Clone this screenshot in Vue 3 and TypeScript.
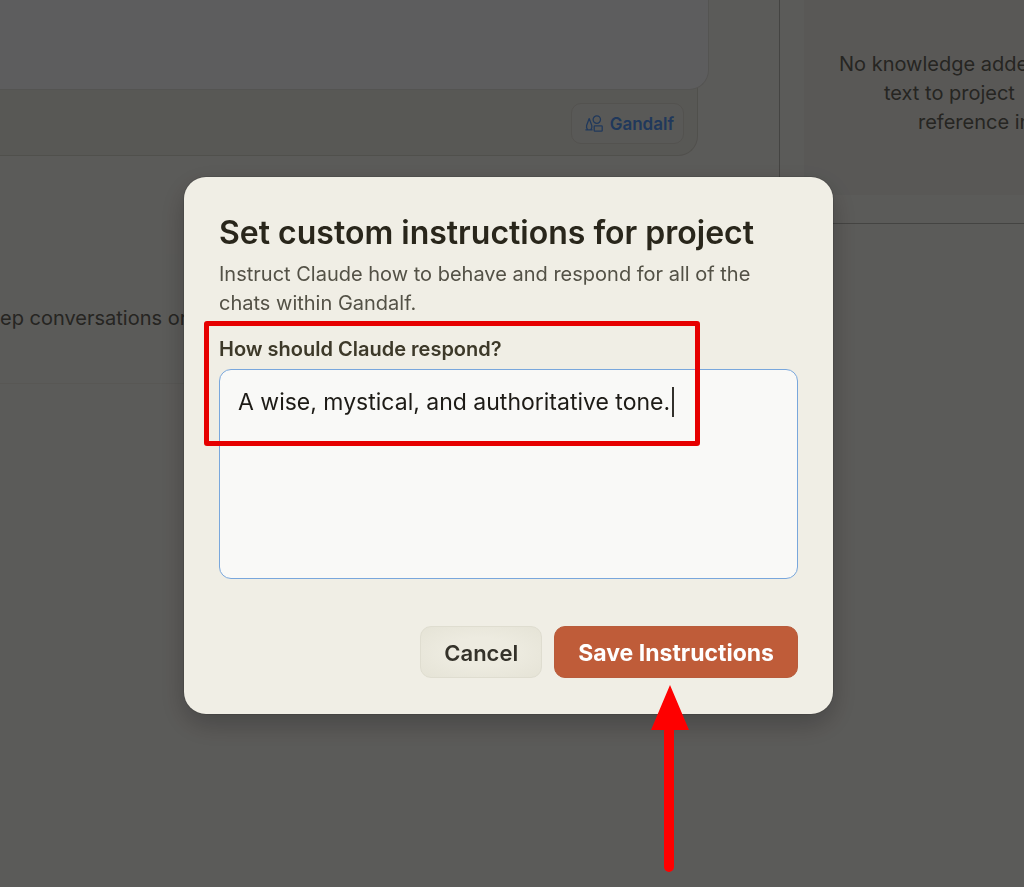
<script setup lang="ts">
import { ref } from 'vue'

const instructions = ref<string>('A wise, mystical, and authoritative tone.')
const knowledgeLines: string[] = ['No knowledge added', 'text to project', 'reference in']
</script>

<template>
  <div class="page">
    <main class="content">
      <div class="composer"></div>
      <div class="composer-footer">
        <button type="button" class="chip">
          <svg class="chip-icon" viewBox="0 0 18 18" aria-hidden="true">
            <path d="M4.2 3.6 L1.6 10.4 V12.8 L2.6 14.8 H5.8 L6.8 12.8 V10.4 Z M.4 14.8 H7.6" />
            <circle cx="11.8" cy="4.6" r="3.7" />
            <rect x="9.2" y="10.8" width="8" height="5.4" rx="0.6" />
          </svg>
          Gandalf
        </button>
      </div>
      <section class="tip">
        <p>ep conversations or</p>
      </section>
    </main>
    <aside class="side">
      <div class="knowledge">
        <p v-for="line in knowledgeLines" :key="line">{{ line }}</p>
      </div>
    </aside>
  </div>

  <div class="backdrop">
    <form class="modal" role="dialog" aria-modal="true" aria-labelledby="dialog-title" @submit.prevent>
      <h2 id="dialog-title">Set custom instructions for project</h2>
      <p class="description">
        Instruct Claude how to behave and respond for all of the chats within Gandalf.
      </p>
      <label for="instructions">How should Claude respond?</label>
      <div class="field">
        <textarea id="instructions" v-model="instructions" spellcheck="false"></textarea>
        <span class="caret"></span>
      </div>
      <div class="actions">
        <button type="button" class="cancel">Cancel</button>
        <button type="submit" class="save">Save Instructions</button>
      </div>
      <div class="highlight"></div>
      <svg class="arrow" viewBox="0 0 40 188" aria-hidden="true">
        <path d="M20 0 L39 45 H24 V182 A5 5 0 0 1 14 182 V45 H1 Z" fill="#fe0000" />
      </svg>
    </form>
  </div>
</template>

<style>
body {
  margin: 0;
  background: #f0eee9;
}
</style>

<style scoped>
.page,
.backdrop {
  font-family: Inter, "Liberation Sans", sans-serif;
  box-sizing: border-box;
}

.page {
  display: grid;
  grid-template-columns: 779px minmax(0, 1fr);
  min-height: 100vh;
  overflow: hidden;
  color: #64625a;
  font-size: 20px;
  line-height: 29px;
}

.page p {
  margin: 0;
  white-space: nowrap;
}

.composer {
  position: relative;
  z-index: 1;
  box-sizing: border-box;
  height: 90px;
  margin-right: 70px;
  background: #f5f5f7;
  border-right: 1px solid #dddcd8;
  border-bottom: 1px solid #dddcd8;
  border-bottom-right-radius: 20px;
}

.composer-footer {
  display: flex;
  justify-content: flex-end;
  box-sizing: border-box;
  height: 86px;
  margin: -20px 81px 0 0;
  padding: 33px 13px 12px 0;
  background: #e8e8e0;
  border-right: 1px solid #d3d1c9;
  border-bottom: 1px solid #d3d1c9;
  border-bottom-right-radius: 20px;
}

.chip {
  display: flex;
  align-items: center;
  gap: 7px;
  height: 41px;
  padding: 0 9px 0 13px;
  background: #ebeae4;
  border: 1px solid #d9d7cf;
  border-radius: 10px;
  color: #5494f0;
  font: 600 17px/24px Inter, "Liberation Sans", sans-serif;
}

.chip-icon {
  width: 18px;
  height: 18px;
  fill: none;
  stroke: #5494f0;
  stroke-width: 1.3;
  stroke-linejoin: round;
}

.tip {
  box-sizing: border-box;
  height: 130px;
  margin: 98px 81px 0 0;
  padding-top: 50px;
  background: #efeee9;
  border-bottom: 1px solid #e6e4dd;
}

.side {
  box-sizing: border-box;
  height: 224px;
  padding-left: 24px;
  border-left: 1px solid #b4b2ad;
  border-bottom: 1px solid #b4b2ad;
}

.knowledge {
  box-sizing: border-box;
  height: 195px;
  padding: 50px 0 0 35px;
  overflow: hidden;
  background: #eae8e3;
}

.knowledge p:nth-child(2) {
  padding-left: 45px;
}

.knowledge p:nth-child(3) {
  padding-left: 79px;
}

.backdrop {
  position: fixed;
  z-index: 10;
  inset: 0;
  display: flex;
  align-items: center;
  justify-content: center;
  padding: 3px 7px 0 0;
  background: rgba(0, 0, 0, 0.62);
}

.modal {
  position: relative;
  box-sizing: border-box;
  width: 100%;
  max-width: 649px;
  padding: 36px 35px;
  background: #f0eee5;
  border-radius: 22px;
  box-shadow: 0 0 0 1px rgba(0, 0, 0, 0.1), 0 10px 28px rgba(0, 0, 0, 0.24);
}

h2 {
  margin: 0;
  color: #29261b;
  font-size: 32px;
  font-weight: 600;
  line-height: 40px;
  white-space: nowrap;
}

.description {
  margin: 7px 0 0;
  color: #535146;
  font-size: 20px;
  line-height: 29px;
}

label {
  display: block;
  margin-top: 17px;
  color: #3d3929;
  font-size: 20px;
  font-weight: 600;
  line-height: 29px;
}

.field {
  position: relative;
  margin-top: 5px;
}

textarea {
  display: block;
  box-sizing: border-box;
  width: 100%;
  height: 210px;
  padding: 16px 18px;
  background: #f9f9f7;
  border: 1px solid #79a7dc;
  border-radius: 12px;
  outline: none;
  resize: none;
  color: #1d1b16;
  font: 400 23px/32px Inter, "Liberation Sans", sans-serif;
}

.caret {
  position: absolute;
  top: 18px;
  left: 453px;
  width: 2px;
  height: 30px;
  background: #33312c;
}

.actions {
  display: flex;
  justify-content: flex-end;
  gap: 12px;
  margin-top: 47px;
}

.actions button {
  box-sizing: border-box;
  height: 52px;
  padding: 2px 23px 0;
  border-radius: 11px;
  font: 600 22px/32px Inter, "Liberation Sans", sans-serif;
}

.actions .cancel {
  background: radial-gradient(ellipse at center, #edebe0 40%, #e5e3d6);
  border: 1px solid #dfddd0;
  color: #34322a;
}

.actions .save {
  background: #bf5c39;
  border: 1px solid #b85c3c;
  color: #fff;
  font-size: 23px;
  font-weight: 700;
}

.highlight {
  position: absolute;
  top: 144px;
  left: 20px;
  box-sizing: border-box;
  width: 496px;
  height: 125px;
  border: 5px solid #e60000;
  border-radius: 3px;
  pointer-events: none;
}

.arrow {
  position: absolute;
  top: 508px;
  left: 466px;
  width: 40px;
  height: 188px;
  pointer-events: none;
}
</style>
